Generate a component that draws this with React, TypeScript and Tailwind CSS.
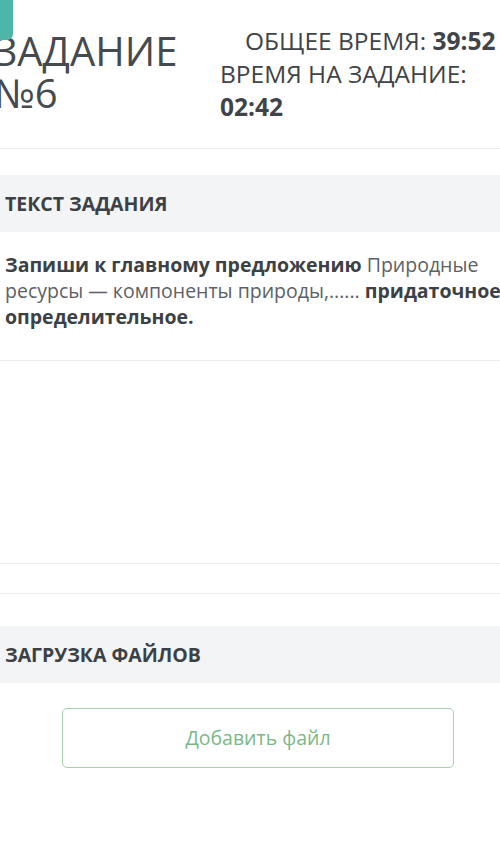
export default function App() {
  const font = { fontFamily: '"Open Sans", "Noto Sans", sans-serif' };
  return (
    <div className="w-[500px] h-[843px] overflow-hidden bg-white relative" style={font}>
      <div className="absolute left-0 top-0 w-[13px] h-[40px] bg-[#4db6a9] rounded-br-[6px] z-10" />
      <div className="ml-[-6px] w-[526px]">
        <div className="h-[149px] border-b border-[#ececec] flex">
          <div className="w-[226px] shrink-0 pt-[30px] text-[40px] leading-[42px] text-[#454a4e]">
            ЗАДАНИЕ
            <br />
            №6
          </div>
          <div className="pt-[24px] text-[24.5px] leading-[33px] text-[#3f4448] whitespace-nowrap">
            <div className="pl-[25px]">
              ОБЩЕЕ ВРЕМЯ: <span className="font-bold">39:52</span>
            </div>
            <div>ВРЕМЯ НА ЗАДАНИЕ:</div>
            <div className="font-bold">02:42</div>
          </div>
        </div>
        <div className="mt-[26px] h-[57px] bg-[#f2f4f5] flex items-center pl-[11px] text-[19.5px] font-bold text-[#3c4145]">
          ТЕКСТ ЗАДАНИЯ
        </div>
        <div className="pl-[11px] pr-[6px] pt-[20px] h-[129px] border-b border-[#ececec] text-[19.5px] leading-[26px] text-[#5c6165]">
          <span className="font-bold text-[#3c4145]">Запиши к главному предложению</span> Природные ресурсы — компоненты природы,......{' '}
          <span className="font-bold text-[#3c4145]">придаточное определительное.</span>
        </div>
        <div className="h-[203px] border-b border-[#ececec]" />
        <div className="h-[30px] border-b border-[#ececec]" />
        <div className="mt-[32px] h-[57px] bg-[#f2f4f5] flex items-center pl-[11px] text-[19.5px] font-bold text-[#3c4145]">
          ЗАГРУЗКА ФАЙЛОВ
        </div>
        <div className="pt-[25px] pl-[68px]">
          <div className="w-[392px] h-[60px] border border-[#a9cfad] rounded-[5px] flex items-center justify-center text-[19.5px] text-[#7ab888]">
            Добавить файл
          </div>
        </div>
      </div>
    </div>
  );
}
